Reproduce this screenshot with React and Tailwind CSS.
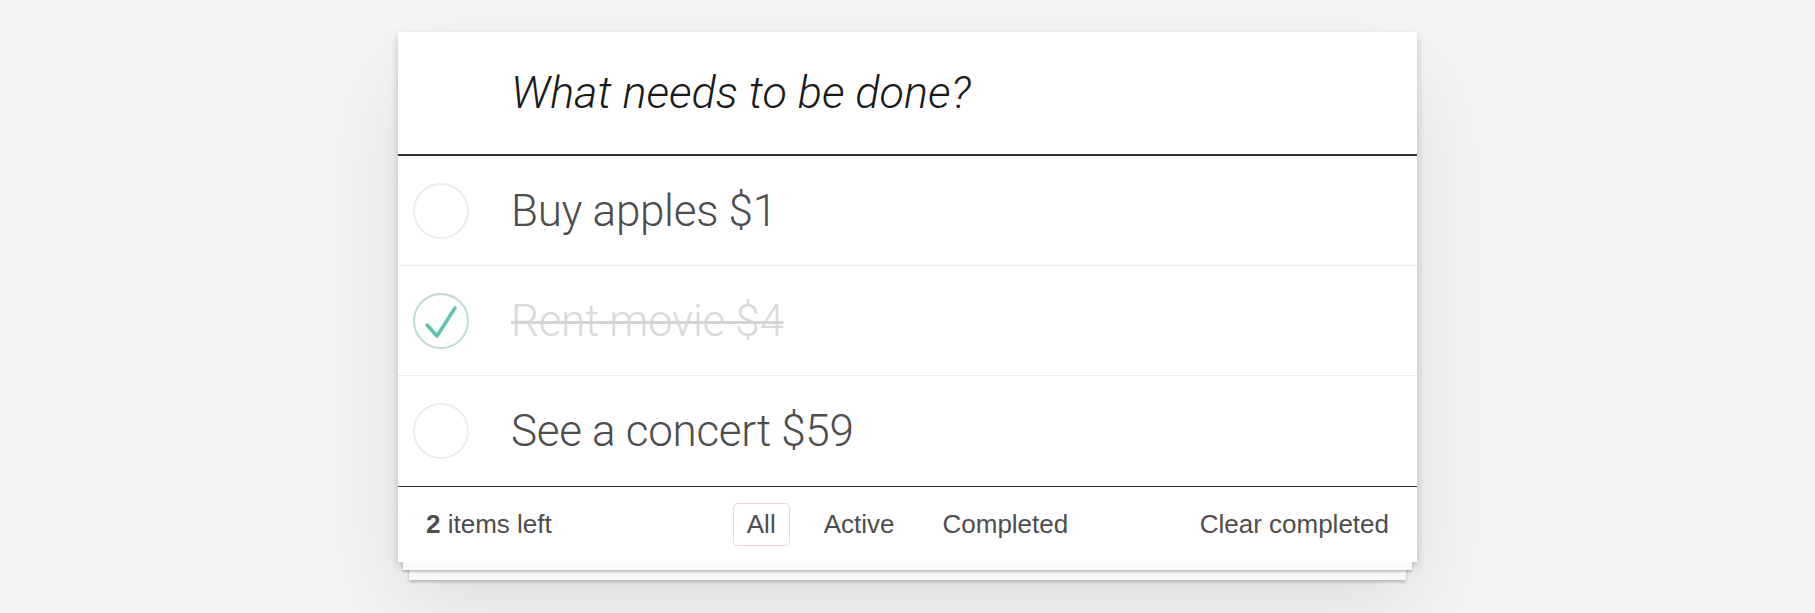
import React from "react";

const todos = [
  { id: 1, title: "Buy apples $1", done: false },
  { id: 2, title: "Rent movie $4", done: true },
  { id: 3, title: "See a concert $59", done: false },
];

const filters = ["All", "Active", "Completed"];

function Toggle({ done }) {
  return (
    <div
      className={`w-[56px] h-[56px] rounded-full border-2 shrink-0 ${
        done ? "border-[#bddad5]" : "border-[#ededed]"
      }`}
    >
      {done && (
        <svg width="52" height="52" viewBox="0 0 52 52" fill="none">
          <path
            d="M12 30 L22 41 L40 13"
            stroke="#5dc2af"
            strokeWidth="3.5"
            strokeLinecap="round"
            strokeLinejoin="round"
          />
        </svg>
      )}
    </div>
  );
}

export default function App() {
  return (
    <div className="min-h-screen bg-[#f5f5f5] pt-8 font-['Roboto',sans-serif]">
      <div className="w-[1019px] mx-auto bg-white shadow-[0_4px_8px_rgba(0,0,0,0.2),0_46px_92px_rgba(0,0,0,0.1)]">
        {/* Header input */}
        <div className="h-[124px] flex items-center pl-[113px] border-b-2 border-[#333]">
          <span className="text-[45px] italic font-light text-[#1a1a1a]">
            What needs to be done?
          </span>
        </div>

        {/* Todo list */}
        <ul>
          {todos.map((todo, i) => (
            <li
              key={todo.id}
              className={`h-[110px] flex items-center pl-[15px] ${
                i < todos.length - 1 ? "border-b border-[#ededed]" : ""
              }`}
            >
              <Toggle done={todo.done} />
              <span
                className={`ml-[42px] text-[44px] font-light tracking-[-0.3px] ${
                  todo.done
                    ? "text-[#d9d9d9] line-through decoration-[3px] decoration-[#d4d4d4]"
                    : "text-[#4d4d4d]"
                }`}
              >
                {todo.title}
              </span>
            </li>
          ))}
        </ul>

        {/* Footer, with the stacked-page edges below it */}
        <footer className="h-[76px] border-t border-[#333] px-[28px] grid grid-cols-[1fr_auto_1fr] items-center text-[26px] text-[#4d4d4d] font-['Liberation_Sans',sans-serif] shadow-[0_13px_0_-5px_#fbfbfb,0_15px_2px_-5px_rgba(0,0,0,0.22),0_29px_0_-11px_#f8f8f8,0_31px_3px_-11px_rgba(0,0,0,0.22)]">
          <span>
            <strong className="font-bold">2</strong> items left
          </span>
          <div className="flex items-center gap-5">
            {filters.map((f) => (
              <span
                key={f}
                className={`h-[43px] px-[13px] flex items-center rounded-[5px] border ${
                  f === "All" ? "border-[rgba(175,47,47,0.2)]" : "border-transparent"
                }`}
              >
                {f}
              </span>
            ))}
          </div>
          <span className="text-right">Clear completed</span>
        </footer>
      </div>
    </div>
  );
}
